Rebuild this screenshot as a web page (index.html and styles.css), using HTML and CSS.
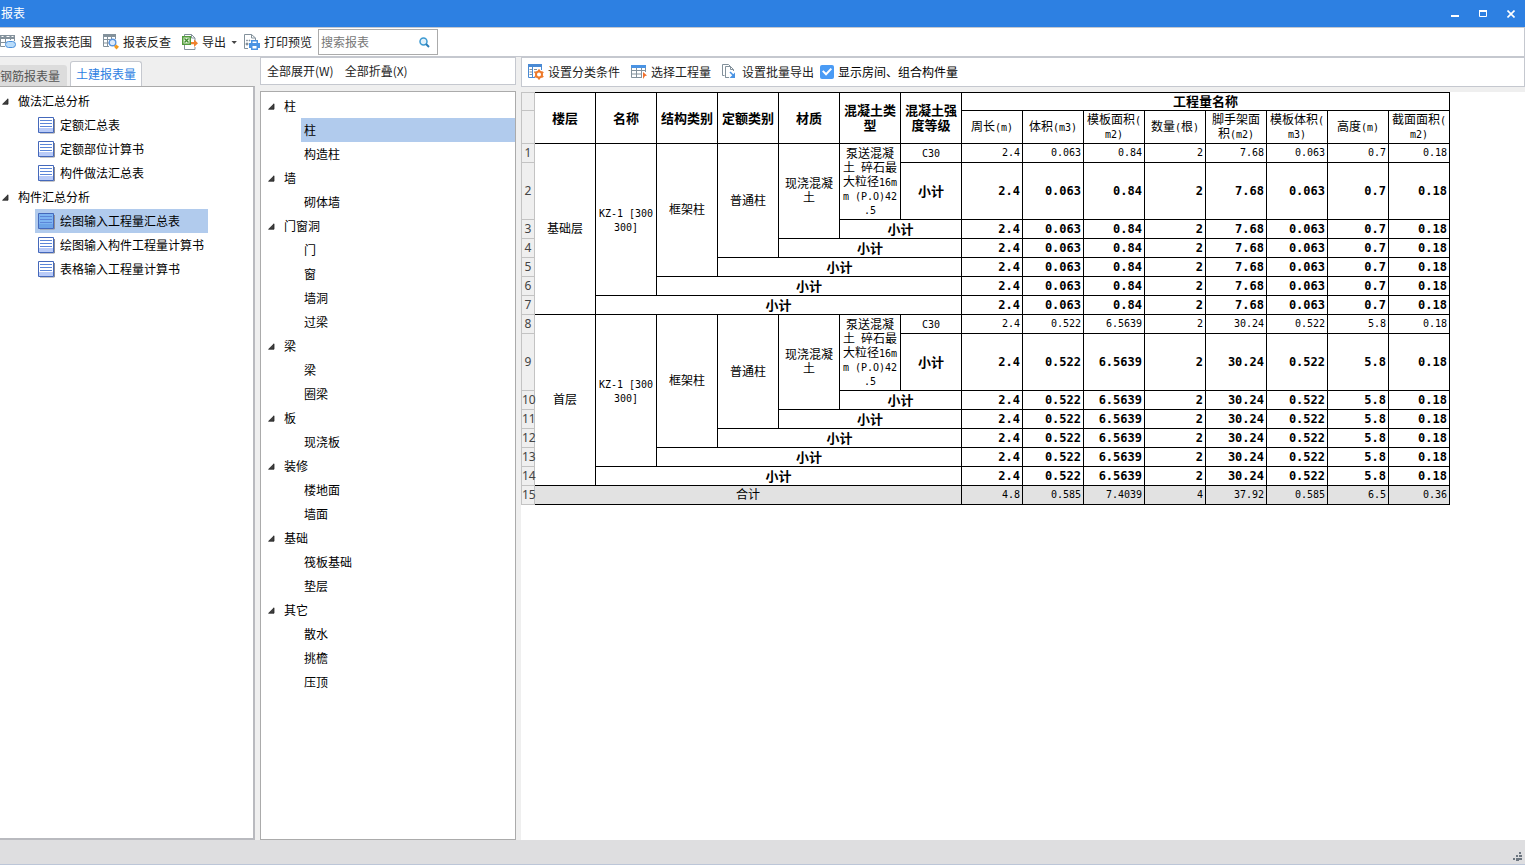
FILE: index.html
```html
<!DOCTYPE html>
<html lang="zh-CN">
<head>
<meta charset="utf-8">
<title>报表</title>
<link rel="stylesheet" href="styles.css">
</head>
<body>
<svg class="defs" aria-hidden="true">
  <symbol id="sheet" viewBox="0 0 17 17">
    <path d="M2 16h14.500V2" fill="none" stroke="#8f8f94"/>
    <path d="M.5 .5h15v15H.5z" fill="var(--paper,#fff)" stroke="#4468bb"/>
    <path d="M1 11h14v4H1z" fill="var(--foot,#b9cbf8)"/>
    <path d="M2 3.500h12M2 6.500h12M2 9.500h12" stroke="#5c86d8"/>
  </symbol>
  <symbol id="arrow" viewBox="0 0 7 7"><path d="M6 .8v5.400H.6z" fill="#404040" stroke="#222" stroke-width=".8"/></symbol>
</svg>
<header class="titlebar">
  <h1>报表</h1>
  <div class="window-buttons">
    <button aria-label="最小化"><svg width="8" height="8"><path d="M0 5h8v2H0z" fill="#fff"/></svg></button>
    <button aria-label="最大化"><svg width="8" height="8"><path d="M.5 1v5.500h7V1M0 1h8" fill="none" stroke="#fff"/><path d="M0 0h8v2H0z" fill="#fff"/></svg></button>
    <button aria-label="关闭"><svg width="8" height="8"><path d="M.5 .5l7 7M7.500 .5l-7 7" stroke="#fff" stroke-width="1.600"/></svg></button>
  </div>
</header>
<nav class="toolbar">
  <button class="tool">
    <svg width="16" height="16"><path d="M0 1h15v3H0z" fill="#83919b"/><path d="M1.500 2h2v1h-2zM6.500 2h3v1h-3zM11.500 2h2v1h-2z" fill="#fff"/><path d="M.5 1v11.500H5M5.500 2v7M10.500 2v4M14.500 2v5M0 4.500h15M0 8.500h6" fill="none" stroke="#83919b"/><rect x="5.500" y="7.500" width="10" height="6" rx="3" fill="#b9dcfa" stroke="#4a90dc"/></svg>设置报表范围</button>
  <button class="tool">
    <svg width="16" height="16"><path d="M0 0h13v3H0z" fill="#83919b"/><path d="M.5 0v12.500H6M4.500 2v10M8.500 2v3M12.500 2v3M0 5.500h7M0 9h6" fill="none" stroke="#83919b"/><circle cx="9.500" cy="8.500" r="3.300" fill="#dceafa" stroke="#5b95dd" stroke-width="1.400"/><path d="M13.200 10.500l2.800 2.300-2.500 2.700-2.500-2.700z" fill="#f39a1d"/></svg>报表反查</button>
  <button class="tool menu-tool">
    <svg width="16" height="16"><path d="M2.500 2V.5h7l3.500 3.500v3M2.500 11v4.500H13V13M9.500 .5V4H13" fill="none" stroke="#83919b"/><path d="M0 2h9v9H0z" fill="#529a3d"/><path d="M1.500 3.500h6v6h-6z" fill="#e4f4dc"/><path d="M2.500 4.500l4 4M6.500 4.500l-4 4" stroke="#3e8b2c" stroke-width="1.300"/><path d="M9 8h3V5.500l4 3.700-4 3.700v-2.700H9z" fill="#f0812d"/></svg>导出<svg width="8" height="16"><path d="M1.500 7h5.400L4.200 10z" fill="#444"/></svg></button>
  <button class="tool last-tool">
    <svg width="16" height="16"><path d="M4 14.500H.5V.5h7L11.500 4v2M7.500 .5V4h4" fill="none" stroke="#83919b"/><path d="M2.500 6h1v1h-1zM2 9h2v2H2zM5 6h1v1H5z" fill="#83919b" stroke="#83919b" stroke-width=".6"/><path d="M7 6h7v3h2v5h-2v2H7v-2H5V9h2z" fill="#4a93e3"/><path d="M8.500 7.500h4V9h-4zM8.500 12h4v2.500h-4z" fill="#fff"/></svg>打印预览</button>
  <label class="search">
    <input type="text" placeholder="搜索报表" aria-label="搜索报表">
    <svg width="11" height="11"><circle cx="4.500" cy="4.500" r="3.500" fill="#e2f1fb" stroke="#3d9ad2" stroke-width="1.500"/><path d="M7 7l3 3" stroke="#2a7cb8" stroke-width="2"/></svg>
  </label>
</nav>
<main class="workspace">
  <section class="reports">
    <div class="tabs" role="tablist">
      <button class="tab" role="tab">钢筋报表量</button>
      <button class="tab active" role="tab" aria-selected="true">土建报表量</button>
    </div>
    <ul class="tree report-tree">
      <li class="group"><svg><use href="#arrow"/></svg>做法汇总分析</li>
      <li class="leaf"><svg><use href="#sheet"/></svg>定额汇总表</li>
      <li class="leaf"><svg><use href="#sheet"/></svg>定额部位计算书</li>
      <li class="leaf"><svg><use href="#sheet"/></svg>构件做法汇总表</li>
      <li class="group"><svg><use href="#arrow"/></svg>构件汇总分析</li>
      <li class="leaf selected"><svg><use href="#sheet"/></svg>绘图输入工程量汇总表</li>
      <li class="leaf"><svg><use href="#sheet"/></svg>绘图输入构件工程量计算书</li>
      <li class="leaf"><svg><use href="#sheet"/></svg>表格输入工程量计算书</li>
    </ul>
  </section>
  <section class="members">
    <div class="subbar">
      <button class="tool">全部展开(W)</button>
      <button class="tool">全部折叠(X)</button>
    </div>
    <ul class="tree member-tree">
      <li class="group"><svg><use href="#arrow"/></svg>柱</li>
      <li class="leaf selected">柱</li>
      <li class="leaf">构造柱</li>
      <li class="group"><svg><use href="#arrow"/></svg>墙</li>
      <li class="leaf">砌体墙</li>
      <li class="group"><svg><use href="#arrow"/></svg>门窗洞</li>
      <li class="leaf">门</li>
      <li class="leaf">窗</li>
      <li class="leaf">墙洞</li>
      <li class="leaf">过梁</li>
      <li class="group"><svg><use href="#arrow"/></svg>梁</li>
      <li class="leaf">梁</li>
      <li class="leaf">圈梁</li>
      <li class="group"><svg><use href="#arrow"/></svg>板</li>
      <li class="leaf">现浇板</li>
      <li class="group"><svg><use href="#arrow"/></svg>装修</li>
      <li class="leaf">楼地面</li>
      <li class="leaf">墙面</li>
      <li class="group"><svg><use href="#arrow"/></svg>基础</li>
      <li class="leaf">筏板基础</li>
      <li class="leaf">垫层</li>
      <li class="group"><svg><use href="#arrow"/></svg>其它</li>
      <li class="leaf">散水</li>
      <li class="leaf">挑檐</li>
      <li class="leaf">压顶</li>
    </ul>
  </section>
  <section class="report">
    <div class="subbar report-bar">
      <button class="tool">
        <svg width="16" height="16"><path d="M.5 1v12.500H7M4.500 3v10M13.500 2v4" fill="none" stroke="#4a8ad4"/><path d="M0 0h14v3H0z" fill="#4a8ad4"/><path d="M1.500 5.500H4M1.500 8h2.500M1.500 10.500H4M6 5.500h3M6 8h1" stroke="#83919b"/><circle cx="11" cy="10.500" r="3" fill="#fff" stroke="#ee7a2b" stroke-width="2"/><path d="M11 5.500v2M11 13.500v2M6.700 8l1.700 1M13.600 12l1.700 1M6.700 13l1.700-1M13.600 9l1.700-1" stroke="#ee7a2b" stroke-width="2"/></svg>设置分类条件</button>
      <button class="tool">
        <svg width="16" height="16"><path d="M.5 3v10.500H11M5.500 3v10M10.500 3v10M14.500 3v5M0 6.500h15M0 10h11" fill="none" stroke="#83919b"/><path d="M0 1h15v3H0z" fill="#4a93e3"/><path d="M12 8l4 3.500-2 .5-2 3z" fill="#f0702d"/></svg>选择工程量</button>
      <button class="tool last-tool">
        <svg width="16" height="16"><path d="M2.500 11.500h-2V.5h6l2 2M4 13.500H3.500v-11h5l3 3V7M8.500 2.500v3h3M3.500 13.500H7" fill="none" stroke="#83919b"/><path d="M8 8l4 4" stroke="#4a93e3" stroke-width="1.600"/><path d="M13 8.500V14H7.500z" fill="#4a93e3"/></svg>设置批量导出</button>
      <label class="check"><input type="checkbox" checked>显示房间、组合构件量</label>
    </div>
    <div class="sheet">
      <table>
        <colgroup><col class="index-col"><col span="15"></colgroup>
        <thead>
          <tr class="r-top"><td class="index"></td><th rowspan="2">楼层</th><th rowspan="2">名称</th><th rowspan="2">结构类别</th><th rowspan="2">定额类别</th><th rowspan="2">材质</th><th rowspan="2">混凝土类<br>型</th><th rowspan="2">混凝土强<br>度等级</th><th colspan="8">工程量名称</th></tr>
          <tr class="r-units"><td class="index"></td><th class="unit">周长<span>(m)</span></th><th class="unit">体积<span>(m3)</span></th><th class="unit">模板面积<span>(<br>m2)</span></th><th class="unit">数量<span>(</span>根<span>)</span></th><th class="unit">脚手架面<br>积<span>(m2)</span></th><th class="unit">模板体积<span>(<br>m3)</span></th><th class="unit">高度<span>(m)</span></th><th class="unit">截面面积<span>(<br>m2)</span></th></tr>
        </thead>
        <tbody>
          <tr><td class="index">1</td><td class="text" rowspan="7">基础层</td><td class="text" rowspan="6"><span>KZ-1 [300<br>300]</span></td><td class="text" rowspan="5">框架柱</td><td class="text" rowspan="4">普通柱</td><td class="text" rowspan="3">现浇混凝<br>土</td><td class="text" rowspan="2">泵送混凝<br>土<span> </span>碎石最<br>大粒径<span>16m<br>m (P.O)42<br>.5</span></td><td class="text"><span>C30</span></td><td>2.4</td><td>0.063</td><td>0.84</td><td>2</td><td>7.68</td><td>0.063</td><td>0.7</td><td>0.18</td></tr>
          <tr class="sum tall"><td class="index">2</td><th>小计</th><td>2.4</td><td>0.063</td><td>0.84</td><td>2</td><td>7.68</td><td>0.063</td><td>0.7</td><td>0.18</td></tr>
          <tr class="sum"><td class="index">3</td><th colspan="2">小计</th><td>2.4</td><td>0.063</td><td>0.84</td><td>2</td><td>7.68</td><td>0.063</td><td>0.7</td><td>0.18</td></tr>
          <tr class="sum"><td class="index">4</td><th colspan="3">小计</th><td>2.4</td><td>0.063</td><td>0.84</td><td>2</td><td>7.68</td><td>0.063</td><td>0.7</td><td>0.18</td></tr>
          <tr class="sum"><td class="index">5</td><th colspan="4">小计</th><td>2.4</td><td>0.063</td><td>0.84</td><td>2</td><td>7.68</td><td>0.063</td><td>0.7</td><td>0.18</td></tr>
          <tr class="sum"><td class="index">6</td><th colspan="5">小计</th><td>2.4</td><td>0.063</td><td>0.84</td><td>2</td><td>7.68</td><td>0.063</td><td>0.7</td><td>0.18</td></tr>
          <tr class="sum"><td class="index">7</td><th colspan="6">小计</th><td>2.4</td><td>0.063</td><td>0.84</td><td>2</td><td>7.68</td><td>0.063</td><td>0.7</td><td>0.18</td></tr>
          <tr><td class="index">8</td><td class="text" rowspan="7">首层</td><td class="text" rowspan="6"><span>KZ-1 [300<br>300]</span></td><td class="text" rowspan="5">框架柱</td><td class="text" rowspan="4">普通柱</td><td class="text" rowspan="3">现浇混凝<br>土</td><td class="text" rowspan="2">泵送混凝<br>土<span> </span>碎石最<br>大粒径<span>16m<br>m (P.O)42<br>.5</span></td><td class="text"><span>C30</span></td><td>2.4</td><td>0.522</td><td>6.5639</td><td>2</td><td>30.24</td><td>0.522</td><td>5.8</td><td>0.18</td></tr>
          <tr class="sum tall"><td class="index">9</td><th>小计</th><td>2.4</td><td>0.522</td><td>6.5639</td><td>2</td><td>30.24</td><td>0.522</td><td>5.8</td><td>0.18</td></tr>
          <tr class="sum"><td class="index">10</td><th colspan="2">小计</th><td>2.4</td><td>0.522</td><td>6.5639</td><td>2</td><td>30.24</td><td>0.522</td><td>5.8</td><td>0.18</td></tr>
          <tr class="sum"><td class="index">11</td><th colspan="3">小计</th><td>2.4</td><td>0.522</td><td>6.5639</td><td>2</td><td>30.24</td><td>0.522</td><td>5.8</td><td>0.18</td></tr>
          <tr class="sum"><td class="index">12</td><th colspan="4">小计</th><td>2.4</td><td>0.522</td><td>6.5639</td><td>2</td><td>30.24</td><td>0.522</td><td>5.8</td><td>0.18</td></tr>
          <tr class="sum"><td class="index">13</td><th colspan="5">小计</th><td>2.4</td><td>0.522</td><td>6.5639</td><td>2</td><td>30.24</td><td>0.522</td><td>5.8</td><td>0.18</td></tr>
          <tr class="sum"><td class="index">14</td><th colspan="6">小计</th><td>2.4</td><td>0.522</td><td>6.5639</td><td>2</td><td>30.24</td><td>0.522</td><td>5.8</td><td>0.18</td></tr>
        </tbody>
        <tfoot>
          <tr class="total"><td class="index">15</td><td class="text" colspan="7">合计</td><td>4.8</td><td>0.585</td><td>7.4039</td><td>4</td><td>37.92</td><td>0.585</td><td>6.5</td><td>0.36</td></tr>
        </tfoot>
      </table>
    </div>
  </section>
</main>
<footer class="statusbar">
  <svg width="9" height="9"><path d="M6 0h2v2H6zM3 3h2v2H3zM6 3h3v2H6zM0 6h2v2H0zM3 6h3v3H3zM6 6h3v2H6z" fill="#6d7680"/></svg>
</footer>
</body>
</html>
```
FILE: styles.css
```css
* { box-sizing: border-box; }
body {
  margin: 0;
  height: 100vh;
  display: flex;
  flex-direction: column;
  background: #efefef;
  color: #000;
  font: 12px/16px "Noto Sans CJK SC", sans-serif;
}
button {
  border: 0;
  padding: 0;
  background: none;
  color: inherit;
  font: inherit;
}
svg { flex: none; display: block; }
.defs { position: absolute; width: 0; height: 0; }

.titlebar {
  flex: none;
  height: 27px;
  display: flex;
  align-items: center;
  justify-content: space-between;
  padding-left: 1px;
  background: #2d80e2;
  color: #fff;
}
.titlebar h1 {
  margin: 0;
  font: 12px/16px "Noto Sans", "Noto Sans CJK SC", sans-serif;
}
.window-buttons { display: flex; align-self: stretch; }
.window-buttons button {
  width: 28px;
  display: flex;
  align-items: center;
  justify-content: center;
}

.toolbar {
  flex: none;
  height: 30px;
  display: flex;
  align-items: center;
  gap: 6px;
  background: #fff;
  border: solid #c5c8cf;
  border-width: 1px 1px 1px 0;
}
.tool {
  display: flex;
  align-items: center;
  gap: 4px;
  padding-right: 5px;
  color: #222;
  white-space: nowrap;
}
.menu-tool, .last-tool { padding-right: 0; }
.search {
  width: 120px;
  height: 26px;
  display: flex;
  align-items: center;
  padding: 0 7px 0 2px;
  border: 1px solid #ababab;
}
.search input {
  flex: 1;
  min-width: 0;
  border: 0;
  padding: 0;
  outline: 0;
  background: none;
  font: inherit;
}
.search input::placeholder { color: #777; }

.workspace {
  flex: 1;
  min-height: 0;
  display: grid;
  grid-template-columns: 255px 256px minmax(0, 1fr);
  column-gap: 5px;
}
.workspace > section { display: flex; flex-direction: column; min-height: 0; }
.tabs {
  height: 29px;
  display: flex;
  align-items: flex-end;
  gap: 3px;
}
.tab {
  height: 21px;
  width: 67px;
  background: #dcdcdc;
  border-radius: 0 3px 0 0;
  color: #555;
  text-align: left;
  white-space: nowrap;
}
.tab.active {
  height: 25px;
  width: 72px;
  background: #fff;
  border: 1px solid #c5c8cf;
  border-bottom: 0;
  border-radius: 3px 3px 0 0;
  color: #2d80e2;
  text-align: center;
}

.tree {
  flex: 1;
  margin: 0;
  padding: 2px 0 0;
  list-style: none;
  background: #fff;
  border: 1px solid #ababab;
}
.tree li {
  height: 24px;
  display: flex;
  align-items: center;
  white-space: nowrap;
}
.group svg { width: 7px; height: 7px; }
.selected { background: #b1cbed; }
.report-tree { border-left: 0; border-right: 2px solid #b9babf; border-bottom: 2px solid #b9babf; }
.report-tree .group { gap: 9px; padding-left: 2px; }
.report-tree .leaf {
  width: max-content;
  gap: 5px;
  margin-left: 35px;
  padding: 0 28px 0 3px;
}
.report-tree .leaf svg { width: 17px; height: 17px; margin-top: 1px; }
.report-tree .selected { --paper: #7db4f2; --foot: #6ba3e8; }
.member-tree .group { gap: 9px; padding-left: 7px; }
.member-tree .leaf { margin-left: 40px; padding-left: 3px; }

.subbar {
  height: 28px;
  display: flex;
  align-items: center;
  gap: 6px;
  padding-left: 6px;
  background: #fff;
  border: 1px solid #c5c8cf;
}
.members .subbar { margin-bottom: 6px; }
.report-bar { height: 30px; margin-bottom: 5px; }
.check { display: flex; align-items: center; gap: 4px; }
.check input {
  appearance: none;
  width: 14px;
  height: 14px;
  margin: 0;
  display: grid;
  place-content: center;
  border-radius: 2px;
  background: #4a9bf5;
}
.check input:checked::before {
  content: "";
  width: 10px;
  height: 8px;
  background: #fff;
  clip-path: polygon(0 45%, 14% 28%, 40% 60%, 86% 0, 100% 16%, 40% 96%);
}

.sheet { flex: 1; min-height: 0; overflow: auto; background: #fff; }
table {
  table-layout: fixed;
  width: 929px;
  border-collapse: separate;
  border-spacing: 0;
}
col { width: 61px; }
.index-col { width: 14px; }
tr { height: 19px; }
.r-units { height: 33px; }
.tall { height: 57px; }
td, th {
  padding: 0 0 2px;
  border: solid #000;
  border-width: 0 1px 1px 0;
  font: 12px/14px "Noto Sans CJK SC", sans-serif;
  text-align: center;
  vertical-align: middle;
  white-space: nowrap;
}
th { font-size: 13px; font-weight: 700; line-height: 15px; }
.unit { font-size: 12px; font-weight: 400; line-height: 14px; }
.r-top > * { border-top-width: 1px; }
td:not(.index):not(.text) {
  padding: 0 2px 0 0;
  font: 10px/14px "DejaVu Sans Mono", monospace;
  text-align: right;
}
.sum td:not(.index):not(.text) { font-size: 12px; font-weight: 700; }
.text span, .unit span {
  font: 10px/10px "DejaVu Sans Mono", monospace;
  white-space: pre;
}
td.index {
  padding: 0;
  background: #efefef;
  border-color: #c3c3c3;
  border-left-width: 1px;
  color: #444;
  font: 12px/16px "Noto Sans", sans-serif;
}
.total > :not(.index) { background: #e2e2e2; }

.statusbar {
  flex: none;
  height: 25px;
  display: flex;
  align-items: flex-end;
  justify-content: flex-end;
  padding: 0 3px 3px;
  background: #dedee0;
  border-bottom: 1px solid #bcc6d8;
}
```
